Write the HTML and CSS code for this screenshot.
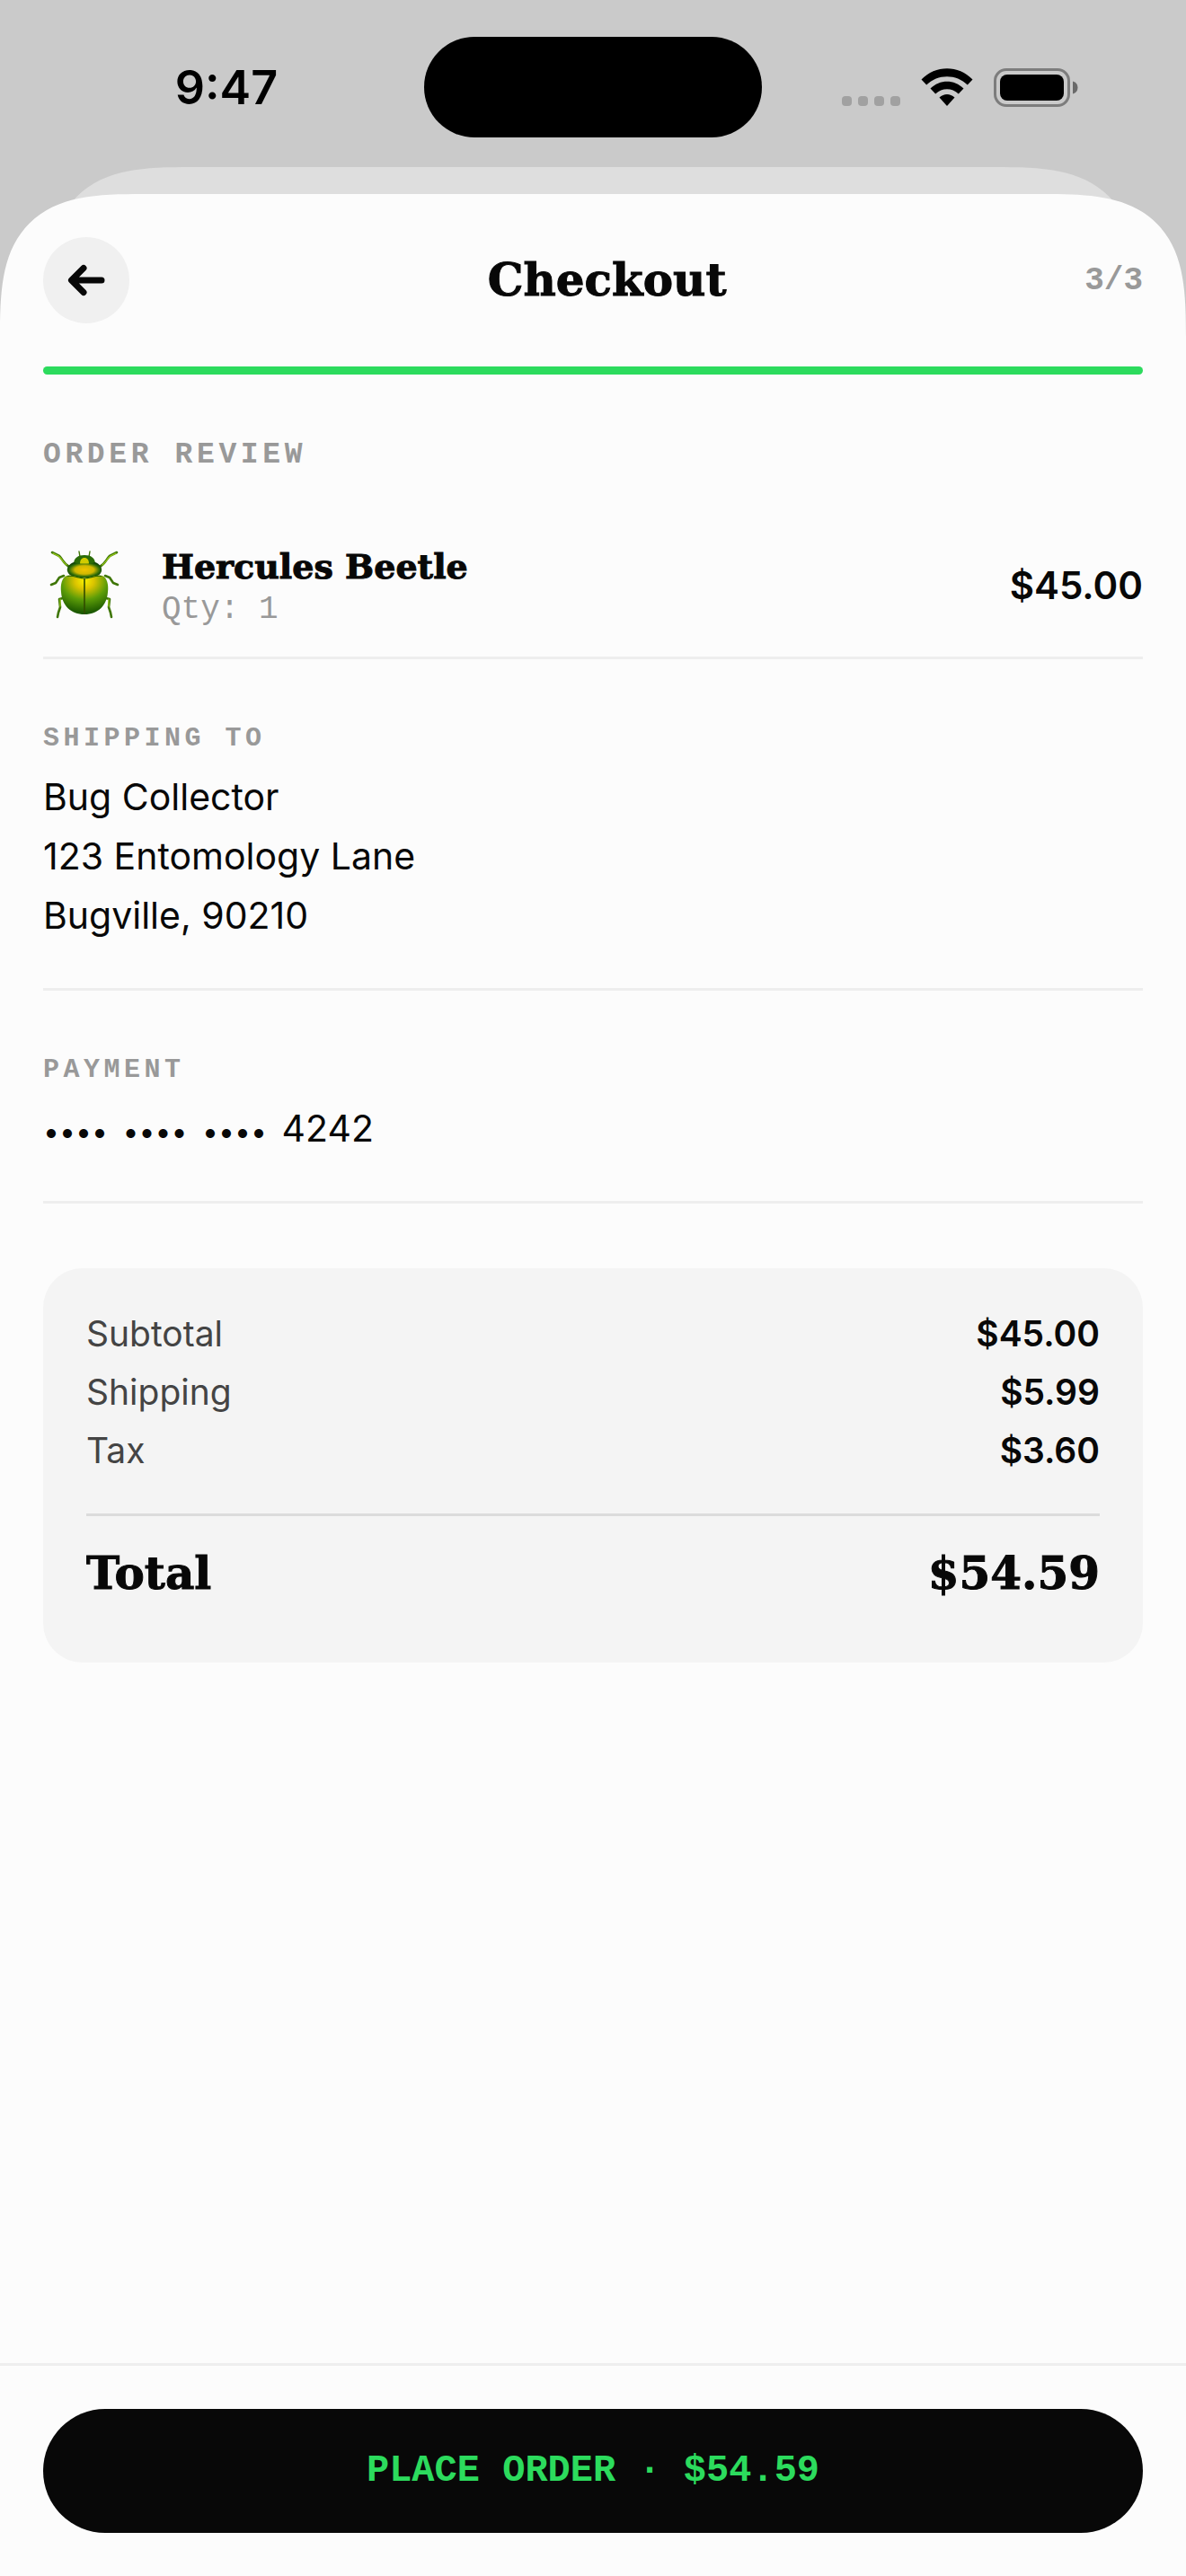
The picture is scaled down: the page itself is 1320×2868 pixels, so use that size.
FILE: index.html
```
<!DOCTYPE html>
<html lang="en">

<head>
  <meta charset="UTF-8" />
  <meta name="viewport" content="width=device-width, initial-scale=1.0" />
  <title>Checkout</title>
  <link rel="stylesheet" href="styles.css">
</head>

<body>
  <div class="status-bar">
    <span class="time">9:47</span>
    <span class="island"></span>
    <div class="status-icons">
      <svg width="65" height="43" viewBox="0 0 65 43" fill="#a1a1a1">
        <rect x="0" y="31" width="11" height="11" rx="4" />
        <rect x="18" y="31" width="11" height="11" rx="4" />
        <rect x="36" y="31" width="11" height="11" rx="4" />
        <rect x="54" y="31" width="11" height="11" rx="4" />
      </svg>
      <svg width="58" height="43" viewBox="0 0 58 43">
        <path d="M0.5 12.6C16 -3.8 42 -3.8 57.5 12.6L51.8 18.5C39.5 6 18.5 6 6.2 18.5Z" />
        <path d="M10.5 22.6C21 12.2 37 12.2 47.5 22.6L41.8 28.5C34.5 21.4 23.5 21.4 16.2 28.5Z" />
        <path d="M20.5 32.5C25.5 27.8 32.5 27.8 37.5 32.5L29 42Z" />
      </svg>
      <svg width="94" height="43" viewBox="0 0 94 43">
        <rect x="1.5" y="1.5" width="82" height="40" rx="12.5" fill="none" stroke="#7d7d7d" stroke-width="3" />
        <rect x="7" y="7" width="71" height="29" rx="8" />
        <path d="M88 14.5C91.5 15.5 93.5 18 93.5 21.5S91.5 27.5 88 28.5Z" fill="#6a6a6a" />
      </svg>
    </div>
  </div>

  <!-- edge of the sheet below -->
  <div class="sheet-behind"></div>

  <main class="sheet">
    <header class="header">
      <button class="back" type="button" aria-label="Back">
        <svg width="48" height="48" viewBox="0 0 48 48" fill="none" stroke="#080808" stroke-width="7" stroke-linecap="round" stroke-linejoin="round">
          <path d="M41 24H8M21 10.5L7.5 24L21 37.5" />
        </svg>
      </button>
      <h1 class="title">Checkout</h1>
      <span class="step">3/3</span>
    </header>
    <div class="progress" role="progressbar" aria-label="Checkout progress" aria-valuemin="0" aria-valuemax="3" aria-valuenow="3">
      <div class="progress-fill" style="width: 100%"></div>
    </div>

    <div class="content">
      <h2 class="heading">ORDER REVIEW</h2>

      <div class="item">
        <svg class="item-icon" viewBox="12 21 84 80">
          <defs>
            <radialGradient id="shell" cx="0.5" cy="0.15" r="0.8">
              <stop offset="0" stop-color="#f8f000" />
              <stop offset="0.25" stop-color="#dcc400" />
              <stop offset="0.6" stop-color="#5c9c08" />
              <stop offset="1" stop-color="#1d5a00" />
            </radialGradient>
            <radialGradient id="thorax" cx="0.5" cy="0.5" r="0.55">
              <stop offset="0" stop-color="#f0c400" />
              <stop offset="0.5" stop-color="#d0b800" />
              <stop offset="0.8" stop-color="#2f6d08" />
              <stop offset="1" stop-color="#0b3a06" />
            </radialGradient>
          </defs>
          <g fill="none" stroke="#3f7606" stroke-width="2.6" stroke-linecap="round" stroke-linejoin="round">
            <path d="M37 41C31 38 30 33 26 29L18 25" />
            <path d="M71 41C77 38 78 33 82 29L90 25" />
            <path d="M31 51L26 53L22 59L17 61" />
            <path d="M77 51L82 53L86 59L91 61" />
            <path d="M30 76L26 77L27 86L25 92L24 97" />
            <path d="M78 76L82 77L81 86L83 92L84 97" />
            <path d="M49 30L48 24M59 30L60 24" stroke-width="1.4" />
          </g>
          <g fill="none" stroke="#9ccc18" stroke-width="1.2" stroke-linecap="round">
            <path d="M34 39C30 36 29 32 25 29L19 26M74 39C78 36 79 32 83 29L89 26M27 77L27 85M81 77L81 85" />
          </g>
          <path d="M42 38C42 31 47 28 54 28S66 31 66 38Z" fill="#2a6b08" />
          <path d="M49 38C49 33 51 31 54 31S59 33 59 38Z" fill="#d2cc00" />
          <path d="M42 36C47 38 61 38 66 36C71 38 74 42 73 46C71 53 62 53 54 53S37 53 35 46C34 42 37 38 42 36Z" fill="url(#thorax)" />
          <path d="M34 51C40 49 47 53 54 53.5C61 53 68 49 74 51C79 53 81 61 80 69C79 84 69 94 54 94S29 84 28 69C27 61 29 53 34 51Z" fill="url(#shell)" />
          <path d="M35 51.5C41 50 48 54 54 54C60 54 67 50 73 51.5" fill="none" stroke="#2c6400" stroke-width="1.2" />
          <path d="M54 54V94" stroke="#314c00" stroke-width="1.6" />
        </svg>
        <div class="item-info">
          <h3 class="item-name">Hercules Beetle</h3>
          <p class="item-qty">Qty: 1</p>
        </div>
        <span class="item-price">$45.00</span>
      </div>

      <section class="block">
        <h2 class="label">SHIPPING TO</h2>
        <p class="text">Bug Collector</p>
        <p class="text">123 Entomology Lane</p>
        <p class="text">Bugville, 90210</p>
      </section>

      <section class="block">
        <h2 class="label">PAYMENT</h2>
        <p class="text"><span class="dots">••••</span> <span class="dots">••••</span> <span class="dots">••••</span> 4242</p>
      </section>

      <dl class="summary">
        <div class="row">
          <dt>Subtotal</dt>
          <dd>$45.00</dd>
        </div>
        <div class="row">
          <dt>Shipping</dt>
          <dd>$5.99</dd>
        </div>
        <div class="row">
          <dt>Tax</dt>
          <dd>$3.60</dd>
        </div>
        <div class="row total">
          <dt>Total</dt>
          <dd>$54.59</dd>
        </div>
      </dl>
    </div>

    <footer class="footer">
      <button class="place-order" type="button">PLACE ORDER · $54.59</button>
    </footer>
  </main>
</body>

</html>
```
FILE: styles.css
```
* {
  box-sizing: border-box;
  margin: 0;
  padding: 0;
}

body {
  display: flex;
  flex-direction: column;
  min-height: 100vh;
  background-color: #cacaca;
  color: #080808;
  font-family: Inter, "Liberation Sans", sans-serif;
  font-size: 41px;
}

button {
  border: none;
  cursor: pointer;
}

/* status bar */
.status-bar {
  display: grid;
  grid-template-columns: 1fr 376px 1fr;
  align-items: center;
  padding: 41px 0 33px;
  color: #000;
}

.time {
  padding-left: 32px;
  text-align: center;
  font-size: 52px;
  font-weight: 600;
}

.island {
  height: 112px;
  border-radius: 56px;
  background-color: #000;
}

.status-icons {
  display: flex;
  align-items: center;
  gap: 23px;
  padding-left: 89px;
}

/* sheets */
.sheet-behind {
  height: 160px;
  margin: 0 4% -130px;
  border-radius: 114px 114px 0 0;
  background-color: #dedede;
}

.sheet {
  position: relative;
  flex: 1;
  display: flex;
  flex-direction: column;
  border-radius: 114px 114px 0 0;
  background-color: #fcfcfc;
}

/* smoother corners where the browser knows them */
@supports (corner-shape: superellipse(1.6)) {
  .sheet,
  .sheet-behind {
    border-radius: 160px 160px 0 0;
    corner-shape: superellipse(1.6);
  }
}

.header {
  display: flex;
  justify-content: space-between;
  align-items: center;
  padding: 48px;
}

.back {
  display: flex;
  justify-content: center;
  align-items: center;
  width: 96px;
  height: 96px;
  border-radius: 50%;
  background-color: #f0f0f0;
}

.title,
.item-name,
.total {
  font-family: "DejaVu Serif", serif;
  font-weight: 700;
  -webkit-text-stroke: 1px #080808;
}

.title {
  font-size: 50px;
  line-height: 64px;
}

.step {
  color: #999;
  font-family: "Liberation Mono", monospace;
  font-size: 36px;
  font-weight: 700;
}

.progress {
  height: 9px;
  margin: 0 48px;
  border-radius: 5px;
  background-color: #eee;
}

.progress-fill {
  height: 100%;
  border-radius: 5px;
  background-color: #2cdb5d;
}

.content {
  flex: 1;
  padding: 70px 48px 48px;
}

.heading,
.label {
  color: #999;
  font-family: "Liberation Mono", monospace;
  font-weight: 700;
}

.heading {
  margin-bottom: 44px;
  font-size: 33px;
  line-height: 40px;
  letter-spacing: 0.14em;
}

.label {
  margin-bottom: 14px;
  font-size: 30px;
  line-height: 36px;
  letter-spacing: 0.15em;
}

/* ordered item */
.item {
  display: flex;
  align-items: center;
  padding: 32px 0;
  border-bottom: 3px solid #eee;
}

.item-icon {
  width: 84px;
  height: 80px;
  margin: 0 44px 0 4px;
}

.item-info {
  flex: 1;
}

.item-name {
  font-size: 38px;
  line-height: 56px;
}

.item-qty {
  color: #999;
  font-family: "Liberation Mono", monospace;
  font-size: 36px;
  line-height: 40px;
}

.item-price {
  font-size: 42px;
  font-weight: 600;
}

.block {
  padding: 70px 0 48px;
  border-bottom: 3px solid #eee;
}

.text {
  line-height: 66px;
}

/* masked card digits */
.dots {
  margin-right: 5px;
  font-size: 32px;
  line-height: 1;
}

/* price summary */
.summary {
  display: flex;
  flex-direction: column;
  gap: 16px;
  margin-top: 72px;
  padding: 48px 48px 67px;
  border-radius: 44px;
  background-color: #f4f4f4;
}

.row {
  display: flex;
  justify-content: space-between;
  font-size: 39px;
  line-height: 49px;
}

.row dt {
  color: #444;
}

.row dd {
  font-weight: 600;
}

.total {
  margin-top: 30px;
  padding-top: 32px;
  border-top: 3px solid #dbdbdb;
  font-size: 50px;
  line-height: 64px;
}

.total dt,
.total dd {
  color: #080808;
  font-weight: 700;
}

.footer {
  padding: 48px;
  border-top: 3px solid #eee;
}

.place-order {
  width: 100%;
  height: 138px;
  border-radius: 69px;
  background-color: #080808;
  color: #2cdb5d;
  font-family: "Liberation Mono", monospace;
  font-size: 42px;
  font-weight: 700;
}
```
